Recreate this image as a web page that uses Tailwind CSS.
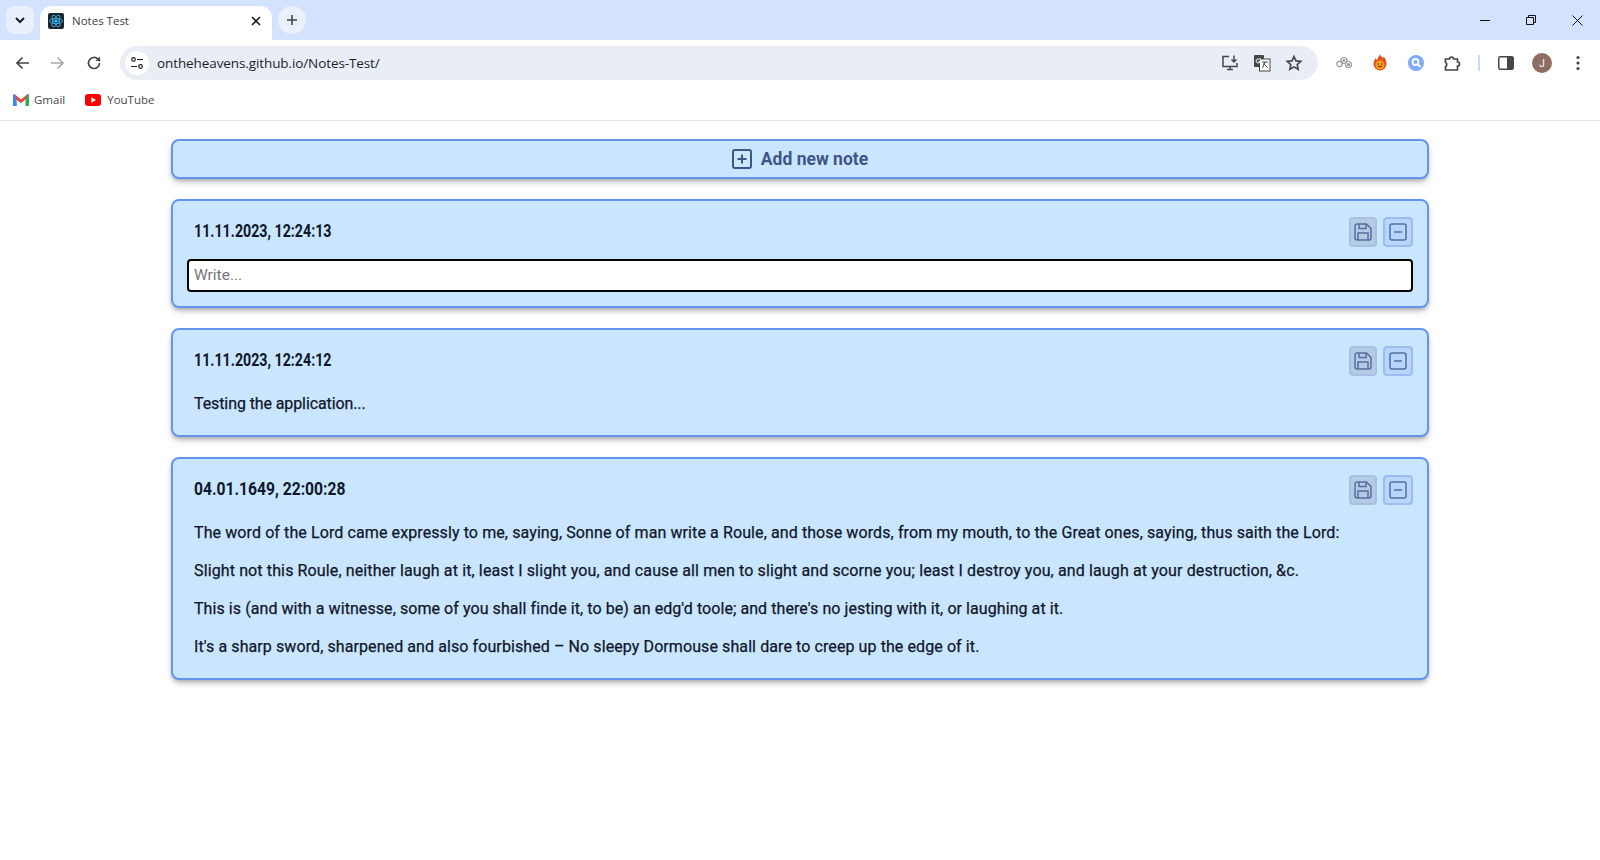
<!DOCTYPE html>
<html lang="en">
<head>
  <meta charset="UTF-8" />
  <title>Notes Test</title>
  <script src="https://cdn.jsdelivr.net/npm/@tailwindcss/browser@4"></script>
</head>
<body class="bg-white text-[#0f172a] h-[860px] overflow-hidden font-['Roboto',sans-serif]">

<!-- Tab strip -->
<div class="h-10 bg-[#d3e3fd] flex items-end pl-[6px]">
  <div class="w-7 h-7 mb-[6px] rounded-lg bg-[#e9f0fc] flex items-center justify-center">
    <svg class="w-3 h-3" viewBox="0 0 12 12" fill="none" stroke="#1f1f1f" stroke-width="2"><path d="M2 4l4 4 4-4"/></svg>
  </div>
  <div class="w-[232px] h-[34px] ml-[6px] bg-white rounded-t-xl flex items-center pl-2 pr-[10px] pb-[5px]">
    <svg class="w-4 h-4 shrink-0" viewBox="0 0 16 16" fill="none" stroke="#38bdf8" stroke-width=".8">
      <rect width="16" height="16" rx="2" fill="#20232a" stroke="none"/>
      <ellipse cx="8" cy="8" rx="6.5" ry="2.6"/>
      <ellipse cx="8" cy="8" rx="6.5" ry="2.6" transform="rotate(60 8 8)"/>
      <ellipse cx="8" cy="8" rx="6.5" ry="2.6" transform="rotate(120 8 8)"/>
      <circle cx="8" cy="8" r="1.2" fill="#38bdf8"/>
    </svg>
    <span class="ml-2 flex-1 text-[11.5px] text-[#3c4043] font-['Open_Sans']">Notes Test</span>
    <svg class="w-3 h-3" viewBox="0 0 12 12" stroke="#1f1f1f" stroke-width="1.6"><path d="M2 2l8 8M10 2l-8 8"/></svg>
  </div>
  <div class="w-7 h-7 mb-[6px] ml-[6px] rounded-full bg-[#e9f0fc] flex items-center justify-center">
    <svg class="w-3 h-3" viewBox="0 0 12 12" stroke="#444746" stroke-width="1.6"><path d="M6 1v10M1 6h10"/></svg>
  </div>
  <div class="flex-1"></div>
  <!-- Window controls -->
  <div class="flex h-10 items-center">
    <div class="w-[46px] flex justify-center"><svg class="w-[10px] h-[10px]" viewBox="0 0 10 10" stroke="#111" stroke-width="1"><path d="M0 5.5h10"/></svg></div>
    <div class="w-[46px] flex justify-center"><svg class="w-[10px] h-[10px]" viewBox="0 0 10 10" fill="none" stroke="#111" stroke-width="1"><path d="M.5 2.5h7v7h-7zM2.5 2.5v-2h7v7h-2"/></svg></div>
    <div class="w-[46px] flex justify-center"><svg class="w-[11px] h-[11px]" viewBox="0 0 11 11" stroke="#111" stroke-width="1"><path d="M.5.5l10 10M10.500.5l-10 10"/></svg></div>
  </div>
</div>

<!-- Toolbar -->
<div class="h-[46px] bg-white flex items-center pl-[13px] pr-[9px] rounded-tl-lg rounded-tr-lg">
  <svg class="w-[18px] h-[18px] ml-[1px]" viewBox="0 0 18 18" fill="none" stroke="#444746" stroke-width="1.7"><path d="M15 9H3.500M8.500 3.500L3 9l5.500 5.500"/></svg>
  <svg class="w-[18px] h-[18px] ml-4" viewBox="0 0 18 18" fill="none" stroke="#a8abad" stroke-width="1.7"><path d="M3 9h11.500M9.500 3.500L15 9l-5.500 5.500"/></svg>
  <svg class="w-[18px] h-[18px] ml-[19px]" viewBox="0 0 18 18" fill="none" stroke="#444746" stroke-width="1.7"><path d="M14.500 9a5.500 5.500 0 1 1-1.600-3.900L15 7"/><path d="M15 2.500V7h-4.500" fill="#444746" stroke="none"/></svg>
  <!-- Address bar -->
  <div class="w-[1198px] ml-[17px] h-[34px] rounded-full bg-[#e9eef6] flex items-center pl-[5px]">
    <div class="w-6 h-6 rounded-full bg-white flex items-center justify-center">
      <svg class="w-[14px] h-[14px]" viewBox="0 0 14 14" fill="none" stroke="#1f1f1f" stroke-width="1.2"><circle cx="3.500" cy="3.500" r="1.800"/><path d="M7 3.500h6M1 10.500h6"/><circle cx="10.500" cy="10.500" r="1.800"/></svg>
    </div>
    <span class="ml-2 flex-1 text-[13.5px] text-[#1f1f1f] font-['Open_Sans'] tracking-[-0.1px]">ontheheavens.github.io/Notes-Test/</span>
    <svg class="w-[18px] h-[18px]" viewBox="0 0 18 18" fill="none" stroke="#444746" stroke-width="1.500"><path d="M8 2.500H2v10h14V9M6 15.500h6M9 12.500v3"/><path d="M13 1.500v6M10.500 5.500l2.500 2.500 2.500-2.500"/></svg>
    <svg class="w-[18px] h-[18px] ml-[14px]" viewBox="0 0 18 18"><rect x="1" y="1" width="10" height="12" rx="1" fill="#444746"/><rect x="6.500" y="5" width="10.500" height="12" fill="#fff" stroke="#444746"/><path d="M9 8h6M12 8l-2.500 6M10.500 9.500l4 4" stroke="#444746" fill="none"/><path d="M8 5H5a2 2 0 1 0 2 2.500H5.500" stroke="#fff" fill="none"/></svg>
    <svg class="w-[18px] h-[18px] ml-[14px] mr-[15px]" viewBox="0 0 18 18" fill="none" stroke="#444746" stroke-width="1.600"><path d="M9 2.500l2 4.400 4.800.5-3.600 3.200 1 4.700L9 12.900l-4.200 2.400 1-4.700L2.200 7.400 7 6.900z"/></svg>
  </div>
  <!-- Extensions -->
  <svg class="w-[18px] h-[18px] ml-[17px]" viewBox="0 0 18 18" fill="none" stroke="#9a9c9e" stroke-width="1.200"><circle cx="9" cy="6.500" r="3"/><circle cx="13.500" cy="10.500" r="3"/><circle cx="4.500" cy="10" r="2.600"/><circle cx="13.500" cy="10.500" r="1" fill="#9a9c9e"/><circle cx="9" cy="6.500" r="1" fill="#9a9c9e"/></svg>
  <svg class="w-[18px] h-[18px] ml-[18px]" viewBox="0 0 18 18"><path d="M9 0c.8 2.500 2 2.500 2.500 4 .8-.4 1.200-1 1.200-1.500C14.500 4.500 15.500 7 15.500 10a6.500 6.500 0 0 1-13 0C2.500 7.500 3.500 5.500 5 4c0 1 .4 1.600 1 2C6.500 3.500 8.500 2.500 9 0z" fill="#e8501c"/><circle cx="9" cy="11" r="4.500" fill="#f59e1b"/><circle cx="7.300" cy="10" r=".7" fill="#7a2c0c"/><circle cx="10.700" cy="10" r=".7" fill="#7a2c0c"/><path d="M6.500 12c.8 1.600 4.200 1.600 5 0z" fill="#7a2c0c"/></svg>
  <svg class="w-[18px] h-[18px] ml-[18px]" viewBox="0 0 18 18"><circle cx="9" cy="9" r="8" fill="#80aafc"/><circle cx="8.500" cy="8" r="3" fill="none" stroke="#fff" stroke-width="1.800"/><path d="M10.500 10l3 3" stroke="#fff" stroke-width="1.800"/></svg>
  <svg class="w-[18px] h-[18px] ml-[18px]" viewBox="0 0 18 18" fill="none" stroke="#444746" stroke-width="1.700"><path d="M2.500 5H6.500a2 2 0 0 1 4 0H14.500V8a2 2 0 0 1 0 4v4H2.500v-3.500a2.200 2.200 0 0 0 0-4z"/></svg>
  <div class="w-[2px] h-4 bg-[#c7daf7] ml-[17px]"></div>
  <svg class="w-[16px] h-[16px] ml-[18px]" viewBox="0 0 16 16"><rect x=".8" y="1.800" width="14.400" height="12.400" rx="1.500" fill="#fff" stroke="#444746" stroke-width="1.500"/><rect x="9" y="1.800" width="6" height="12.400" fill="#444746"/></svg>
  <div class="w-5 h-5 ml-[18px] rounded-full bg-[#8d6e63] text-white text-[10px] flex items-center justify-center">J</div>
  <svg class="w-[4px] h-[16px] ml-6" viewBox="0 0 4 16" fill="#444746"><circle cx="2" cy="2.500" r="1.600"/><circle cx="2" cy="8" r="1.600"/><circle cx="2" cy="13.500" r="1.600"/></svg>
</div>

<!-- Bookmarks bar -->
<div class="h-[35px] pb-[6px] bg-white border-b border-[#e1e3e5] flex items-center pl-[13px] text-[11.5px] text-[#474747] font-['Open_Sans']">
  <svg class="w-4 h-3" viewBox="0 0 16 12">
    <path d="M0 2v9a1 1 0 0 0 1 1h2.500V5.500L8 9V6L1.800.6A1.100 1.100 0 0 0 0 2z" fill="#4285f4"/>
    <path d="M0 2l3.500 3.500V12H1a1 1 0 0 1-1-1z" fill="#4285f4"/>
    <path d="M12.500 12H15a1 1 0 0 0 1-1V2a1.100 1.100 0 0 0-1.800-1.400L12.500 2z" fill="#34a853"/>
    <path d="M3.500 5.500L1.800.6 8 5.500 14.200.6 12.500 5.500 8 9z" fill="#ea4335"/>
  </svg>
  <span class="ml-[5px]">Gmail</span>
  <svg class="w-4 h-3 ml-5" viewBox="0 0 16 12"><rect width="16" height="12" rx="3" fill="#f00"/><path d="M6.300 3.300v5.400L11 6z" fill="#fff"/></svg>
  <span class="ml-[6px]">YouTube</span>
</div>

<!-- Notes -->
<main class="w-[1258px] ml-[171px] pt-[18px] flex flex-col gap-[20px]">
  <button class="h-10 rounded-lg border-2 border-[#6495ed] bg-[#cae6fe] shadow-md shadow-black/25 flex items-center justify-center gap-[9px] text-[17.5px] font-bold text-[#3f5587]">
    <svg class="w-5 h-5" viewBox="0 0 20 20" fill="none" stroke="currentColor" stroke-width="2"><rect x="1" y="1" width="18" height="18" rx="2"/><path d="M10 5.500v9M5.500 10h9"/></svg>
    Add new note
  </button>

  <section class="h-[109px] rounded-lg border-2 border-[#6495ed] bg-[#cae6fe] shadow-md shadow-black/25 pt-4 px-[14px]">
    <div class="flex items-center justify-between h-[30px]">
      <h2 class="ml-[7px] mb-[2px] text-lg font-bold origin-left scale-x-[0.79]">11.11.2023, 12:24:13</h2>
      <div class="flex gap-[6px]">
        <button class="w-7 h-[30px] rounded bg-[#b4cbe4] border-2 border-[#a8c1e0] text-[#566f9f] flex items-center justify-center">
          <svg class="w-[18px] h-[18px]" viewBox="0 0 18 18" fill="none" stroke="currentColor" stroke-width="1.500"><path d="M2.800 1h9.700L17 5.500V15a2 2 0 0 1-2 2H3a2 2 0 0 1-2-2V3a2 2 0 0 1 1.800-2z"/><path d="M5 1v4.500h7V1M4 17v-7h10v7"/></svg>
        </button>
        <button class="w-[30px] h-[30px] rounded bg-[#b7d6fb] border-2 border-[#9dbdf0] text-[#566f9f] flex items-center justify-center">
          <svg class="w-[18px] h-[18px]" viewBox="0 0 18 18" fill="none" stroke="currentColor" stroke-width="1.500"><rect x="1" y="1" width="16" height="16" rx="2"/><path d="M5 9h8"/></svg>
        </button>
      </div>
    </div>
    <input class="mt-3 w-full h-[33px] rounded border-2 border-black bg-white px-[5px] pb-px text-[15.5px] placeholder:text-[#757575]" placeholder="Write..." />
  </section>

  <section class="h-[109px] rounded-lg border-2 border-[#6495ed] bg-[#cae6fe] shadow-md shadow-black/25 pt-4 px-[14px]">
    <div class="flex items-center justify-between h-[30px]">
      <h2 class="ml-[7px] mb-[2px] text-lg font-bold origin-left scale-x-[0.79]">11.11.2023, 12:24:12</h2>
      <div class="flex gap-[6px]">
        <button class="w-7 h-[30px] rounded bg-[#b4cbe4] border-2 border-[#a8c1e0] text-[#566f9f] flex items-center justify-center">
          <svg class="w-[18px] h-[18px]" viewBox="0 0 18 18" fill="none" stroke="currentColor" stroke-width="1.500"><path d="M2.800 1h9.700L17 5.500V15a2 2 0 0 1-2 2H3a2 2 0 0 1-2-2V3a2 2 0 0 1 1.800-2z"/><path d="M5 1v4.500h7V1M4 17v-7h10v7"/></svg>
        </button>
        <button class="w-[30px] h-[30px] rounded bg-[#b7d6fb] border-2 border-[#9dbdf0] text-[#566f9f] flex items-center justify-center">
          <svg class="w-[18px] h-[18px]" viewBox="0 0 18 18" fill="none" stroke="currentColor" stroke-width="1.500"><rect x="1" y="1" width="16" height="16" rx="2"/><path d="M5 9h8"/></svg>
        </button>
      </div>
    </div>
    <p class="mt-[16px] pl-[7px] leading-6 tracking-[-0.1px] [-webkit-text-stroke:0.25px_#0f172a]">Testing the application...</p>
  </section>

  <section class="h-[223px] rounded-lg border-2 border-[#6495ed] bg-[#cae6fe] shadow-md shadow-black/25 pt-4 px-[14px]">
    <div class="flex items-center justify-between h-[30px]">
      <h2 class="ml-[7px] mb-[2px] text-lg font-bold origin-left scale-x-[0.87]">04.01.1649, 22:00:28</h2>
      <div class="flex gap-[6px]">
        <button class="w-7 h-[30px] rounded bg-[#b4cbe4] border-2 border-[#a8c1e0] text-[#566f9f] flex items-center justify-center">
          <svg class="w-[18px] h-[18px]" viewBox="0 0 18 18" fill="none" stroke="currentColor" stroke-width="1.500"><path d="M2.800 1h9.700L17 5.500V15a2 2 0 0 1-2 2H3a2 2 0 0 1-2-2V3a2 2 0 0 1 1.800-2z"/><path d="M5 1v4.500h7V1M4 17v-7h10v7"/></svg>
        </button>
        <button class="w-[30px] h-[30px] rounded bg-[#b7d6fb] border-2 border-[#9dbdf0] text-[#566f9f] flex items-center justify-center">
          <svg class="w-[18px] h-[18px]" viewBox="0 0 18 18" fill="none" stroke="currentColor" stroke-width="1.500"><rect x="1" y="1" width="16" height="16" rx="2"/><path d="M5 9h8"/></svg>
        </button>
      </div>
    </div>
    <div class="mt-[16px] pl-[7px] flex flex-col gap-[14px] leading-6 whitespace-nowrap [-webkit-text-stroke:0.25px_#0f172a]">
      <p class="tracking-[0.1px]">The word of the Lord came expressly to me, saying, Sonne of man write a Roule, and those words, from my mouth, to the Great ones, saying, thus saith the Lord:</p>
      <p class="tracking-[0.125px]">Slight not this Roule, neither laugh at it, least I slight you, and cause all men to slight and scorne you; least I destroy you, and laugh at your destruction, &amp;c.</p>
      <p class="tracking-[0.07px]">This is (and with a witnesse, some of you shall finde it, to be) an edg'd toole; and there's no jesting with it, or laughing at it.</p>
      <p class="tracking-[0.09px]">It's a sharp sword, sharpened and also fourbished – No sleepy Dormouse shall dare to creep up the edge of it.</p>
    </div>
  </section>
</main>

</body>
</html>
